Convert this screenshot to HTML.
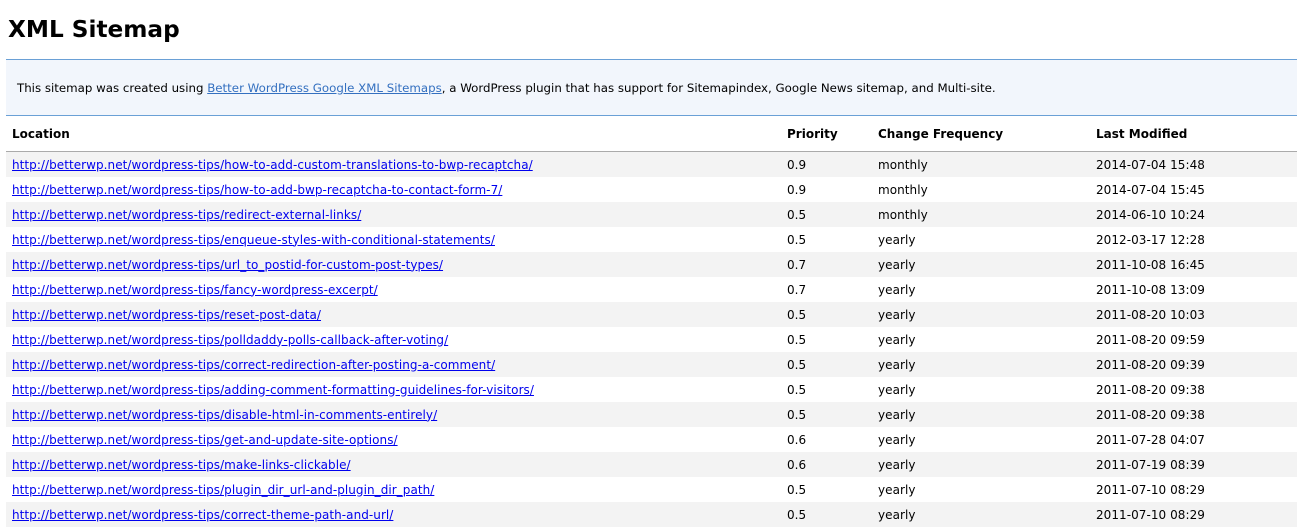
<!DOCTYPE html>
<html><head><meta charset="utf-8"><style>
body{margin:0;padding:0 6px;font-family:"DejaVu Sans","Liberation Sans",sans-serif;font-size:12px;color:#000;background:#fff;width:1291px}
h1{margin:0;height:59px;line-height:60px;font-size:23.2px;font-weight:bold;padding-left:2px}
.info{background:#f2f6fc;border-top:1px solid #6aa0d6;border-bottom:1px solid #6aa0d6;height:55px;line-height:56px;padding-left:11px;font-size:11.8px}
.info a{color:#3470c0}
table{border-collapse:collapse;width:1291px}
th{text-align:left;height:35px;font-size:12px;border-bottom:1px solid #aaa;padding:0 0 0 6px}
td{height:25px;padding:0 0 0 6px;font-size:12px;letter-spacing:0.05px}
tr:nth-child(odd) td{background:#f3f3f3}
a{color:#0000ee}
</style></head><body>
<h1>XML Sitemap</h1>
<div class="info">This sitemap was created using <a href="#">Better WordPress Google XML Sitemaps</a>, a WordPress plugin that has support for Sitemapindex, Google News sitemap, and Multi-site.</div>
<table>
<thead><tr><th style="width:769px">Location</th><th style="width:85px">Priority</th><th style="width:212px">Change Frequency</th><th>Last Modified</th></tr></thead>
<tbody>
<tr><td><a href="#">http://betterwp.net/wordpress-tips/how-to-add-custom-translations-to-bwp-recaptcha/</a></td><td>0.9</td><td>monthly</td><td>2014-07-04 15:48</td></tr>
<tr><td><a href="#">http://betterwp.net/wordpress-tips/how-to-add-bwp-recaptcha-to-contact-form-7/</a></td><td>0.9</td><td>monthly</td><td>2014-07-04 15:45</td></tr>
<tr><td><a href="#">http://betterwp.net/wordpress-tips/redirect-external-links/</a></td><td>0.5</td><td>monthly</td><td>2014-06-10 10:24</td></tr>
<tr><td><a href="#">http://betterwp.net/wordpress-tips/enqueue-styles-with-conditional-statements/</a></td><td>0.5</td><td>yearly</td><td>2012-03-17 12:28</td></tr>
<tr><td><a href="#">http://betterwp.net/wordpress-tips/url_to_postid-for-custom-post-types/</a></td><td>0.7</td><td>yearly</td><td>2011-10-08 16:45</td></tr>
<tr><td><a href="#">http://betterwp.net/wordpress-tips/fancy-wordpress-excerpt/</a></td><td>0.7</td><td>yearly</td><td>2011-10-08 13:09</td></tr>
<tr><td><a href="#">http://betterwp.net/wordpress-tips/reset-post-data/</a></td><td>0.5</td><td>yearly</td><td>2011-08-20 10:03</td></tr>
<tr><td><a href="#">http://betterwp.net/wordpress-tips/polldaddy-polls-callback-after-voting/</a></td><td>0.5</td><td>yearly</td><td>2011-08-20 09:59</td></tr>
<tr><td><a href="#">http://betterwp.net/wordpress-tips/correct-redirection-after-posting-a-comment/</a></td><td>0.5</td><td>yearly</td><td>2011-08-20 09:39</td></tr>
<tr><td><a href="#">http://betterwp.net/wordpress-tips/adding-comment-formatting-guidelines-for-visitors/</a></td><td>0.5</td><td>yearly</td><td>2011-08-20 09:38</td></tr>
<tr><td><a href="#">http://betterwp.net/wordpress-tips/disable-html-in-comments-entirely/</a></td><td>0.5</td><td>yearly</td><td>2011-08-20 09:38</td></tr>
<tr><td><a href="#">http://betterwp.net/wordpress-tips/get-and-update-site-options/</a></td><td>0.6</td><td>yearly</td><td>2011-07-28 04:07</td></tr>
<tr><td><a href="#">http://betterwp.net/wordpress-tips/make-links-clickable/</a></td><td>0.6</td><td>yearly</td><td>2011-07-19 08:39</td></tr>
<tr><td><a href="#">http://betterwp.net/wordpress-tips/plugin_dir_url-and-plugin_dir_path/</a></td><td>0.5</td><td>yearly</td><td>2011-07-10 08:29</td></tr>
<tr><td><a href="#">http://betterwp.net/wordpress-tips/correct-theme-path-and-url/</a></td><td>0.5</td><td>yearly</td><td>2011-07-10 08:29</td></tr>
</tbody></table>
</body></html>
